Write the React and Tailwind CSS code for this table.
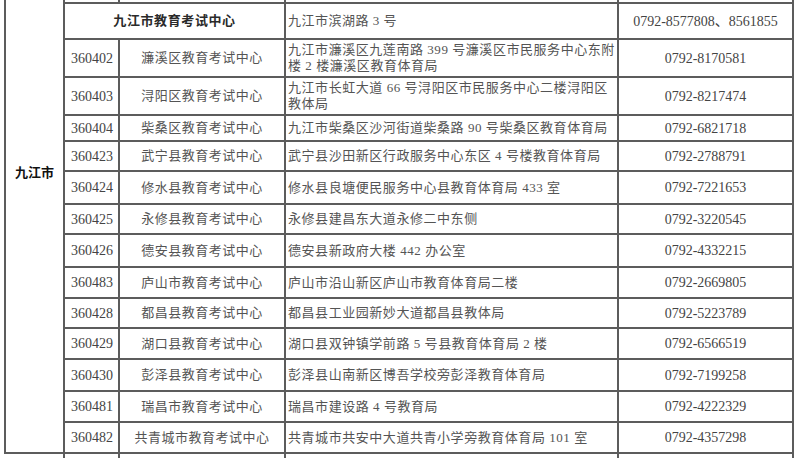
import React from "react";

const rows = [
  { code: "360402", name: "濂溪区教育考试中心", addr: ["九江市濂溪区九莲南路 399 号濂溪区市民服务中心东附", "楼 2 楼濂溪区教育体育局"], tel: "0792-8170581", h: "h-[36px]" },
  { code: "360403", name: "浔阳区教育考试中心", addr: ["九江市长虹大道 66 号浔阳区市民服务中心二楼浔阳区", "教体局"], tel: "0792-8217474", h: "h-[36px]" },
  { code: "360404", name: "柴桑区教育考试中心", addr: ["九江市柴桑区沙河街道柴桑路 90 号柴桑区教育体育局"], tel: "0792-6821718", h: "h-[24px]" },
  { code: "360423", name: "武宁县教育考试中心", addr: ["武宁县沙田新区行政服务中心东区 4 号楼教育体育局"], tel: "0792-2788791", h: "h-[28px]" },
  { code: "360424", name: "修水县教育考试中心", addr: ["修水县良塘便民服务中心县教育体育局 433 室"], tel: "0792-7221653", h: "h-[31px]" },
  { code: "360425", name: "永修县教育考试中心", addr: ["永修县建昌东大道永修二中东侧"], tel: "0792-3220545", h: "h-[28px]" },
  { code: "360426", name: "德安县教育考试中心", addr: ["德安县新政府大楼 442 办公室"], tel: "0792-4332215", h: "h-[31px]" },
  { code: "360483", name: "庐山市教育考试中心", addr: ["庐山市沿山新区庐山市教育体育局二楼"], tel: "0792-2669805", h: "h-[29px]" },
  { code: "360428", name: "都昌县教育考试中心", addr: ["都昌县工业园新妙大道都昌县教体局"], tel: "0792-5223789", h: "h-[28px]" },
  { code: "360429", name: "湖口县教育考试中心", addr: ["湖口县双钟镇学前路 5 号县教育体育局 2 楼"], tel: "0792-6566519", h: "h-[29px]" },
  { code: "360430", name: "彭泽县教育考试中心", addr: ["彭泽县山南新区博吾学校旁彭泽教育体育局"], tel: "0792-7199258", h: "h-[30px]" },
  { code: "360481", name: "瑞昌市教育考试中心", addr: ["瑞昌市建设路 4 号教育局"], tel: "0792-4222329", h: "h-[29px]" },
  { code: "360482", name: "共青城市教育考试中心", addr: ["共青城市共安中大道共青小学旁教育体育局 101 室"], tel: "0792-4357298", h: "h-[29px]" },
];

const font = "font-['Liberation_Serif','Noto_Sans_CJK_SC',serif]";
const cols = "grid grid-cols-[55px_166px_333px_175px]";
const cell = "border-r-2 border-[#5c5c5c]";

export default function App() {
  return (
    <div className={`w-[800px] h-[459px] overflow-hidden bg-white text-[#545454] ${font}`}>
      {/* strip of the row above */}
      <div className="flex h-[2px] pl-[4px]">
        <div className="w-[61px] border-x-2 border-[#5c5c5c]"></div>
        <div className={cols}>
          <div className={cell}></div>
          <div className={cell}></div>
          <div className={cell}></div>
          <div className={cell}></div>
        </div>
      </div>

      <div className="flex pl-[4px]">
        {/* merged city cell */}
        <div className="w-[61px] border-x-2 border-b-2 border-[#5c5c5c] pt-[158px] text-center">
          <span className="font-['Noto_Sans_CJK_SC',sans-serif] text-[13px] font-bold text-[#111]">九江市</span>
        </div>

        <div className="flex flex-col">
          {/* header row */}
          <div className={`${cols} h-[38px] border-y-2 border-[#5c5c5c]`}>
            <div className={`col-span-2 ${cell} flex items-center justify-center font-bold text-[13px] tracking-[0.6px] text-[#2a2a2a]`}>
              九江市教育考试中心
            </div>
            <div className={`${cell} flex items-center pl-[2px] text-[13px] tracking-[0.5px] whitespace-nowrap`}>
              九江市滨湖路 3 号
            </div>
            <div className={`${cell} flex items-center justify-center text-[14px] text-[#444] whitespace-nowrap`}>
              0792-8577808、8561855
            </div>
          </div>

          {rows.map((r) => (
            <div key={r.code} className={`${cols} ${r.h} box-content border-b-2 border-[#5c5c5c]`}>
              <div className={`${cell} flex items-center pl-[6px] text-[14px] text-[#444]`}>{r.code}</div>
              <div className={`${cell} flex items-center justify-center text-[13px] tracking-[0.5px] whitespace-nowrap`}>
                {r.name}
              </div>
              <div className={`${cell} flex flex-col justify-center pl-[2px] text-[13px] leading-[16px] tracking-[0.55px] whitespace-nowrap`}>
                {r.addr.map((a) => (
                  <div key={a}>{a}</div>
                ))}
              </div>
              <div className={`${cell} flex items-center justify-center text-[14px] text-[#444]`}>{r.tel}</div>
            </div>
          ))}
        </div>
      </div>

      {/* strip of the row below */}
      <div className="flex h-[4px] pl-[4px]">
        <div className="w-[61px] border-r-2 border-[#5c5c5c]"></div>
        <div className={cols}>
          <div className={cell}></div>
          <div className={cell}></div>
          <div className={cell}></div>
          <div className={cell}></div>
        </div>
      </div>
    </div>
  );
}
